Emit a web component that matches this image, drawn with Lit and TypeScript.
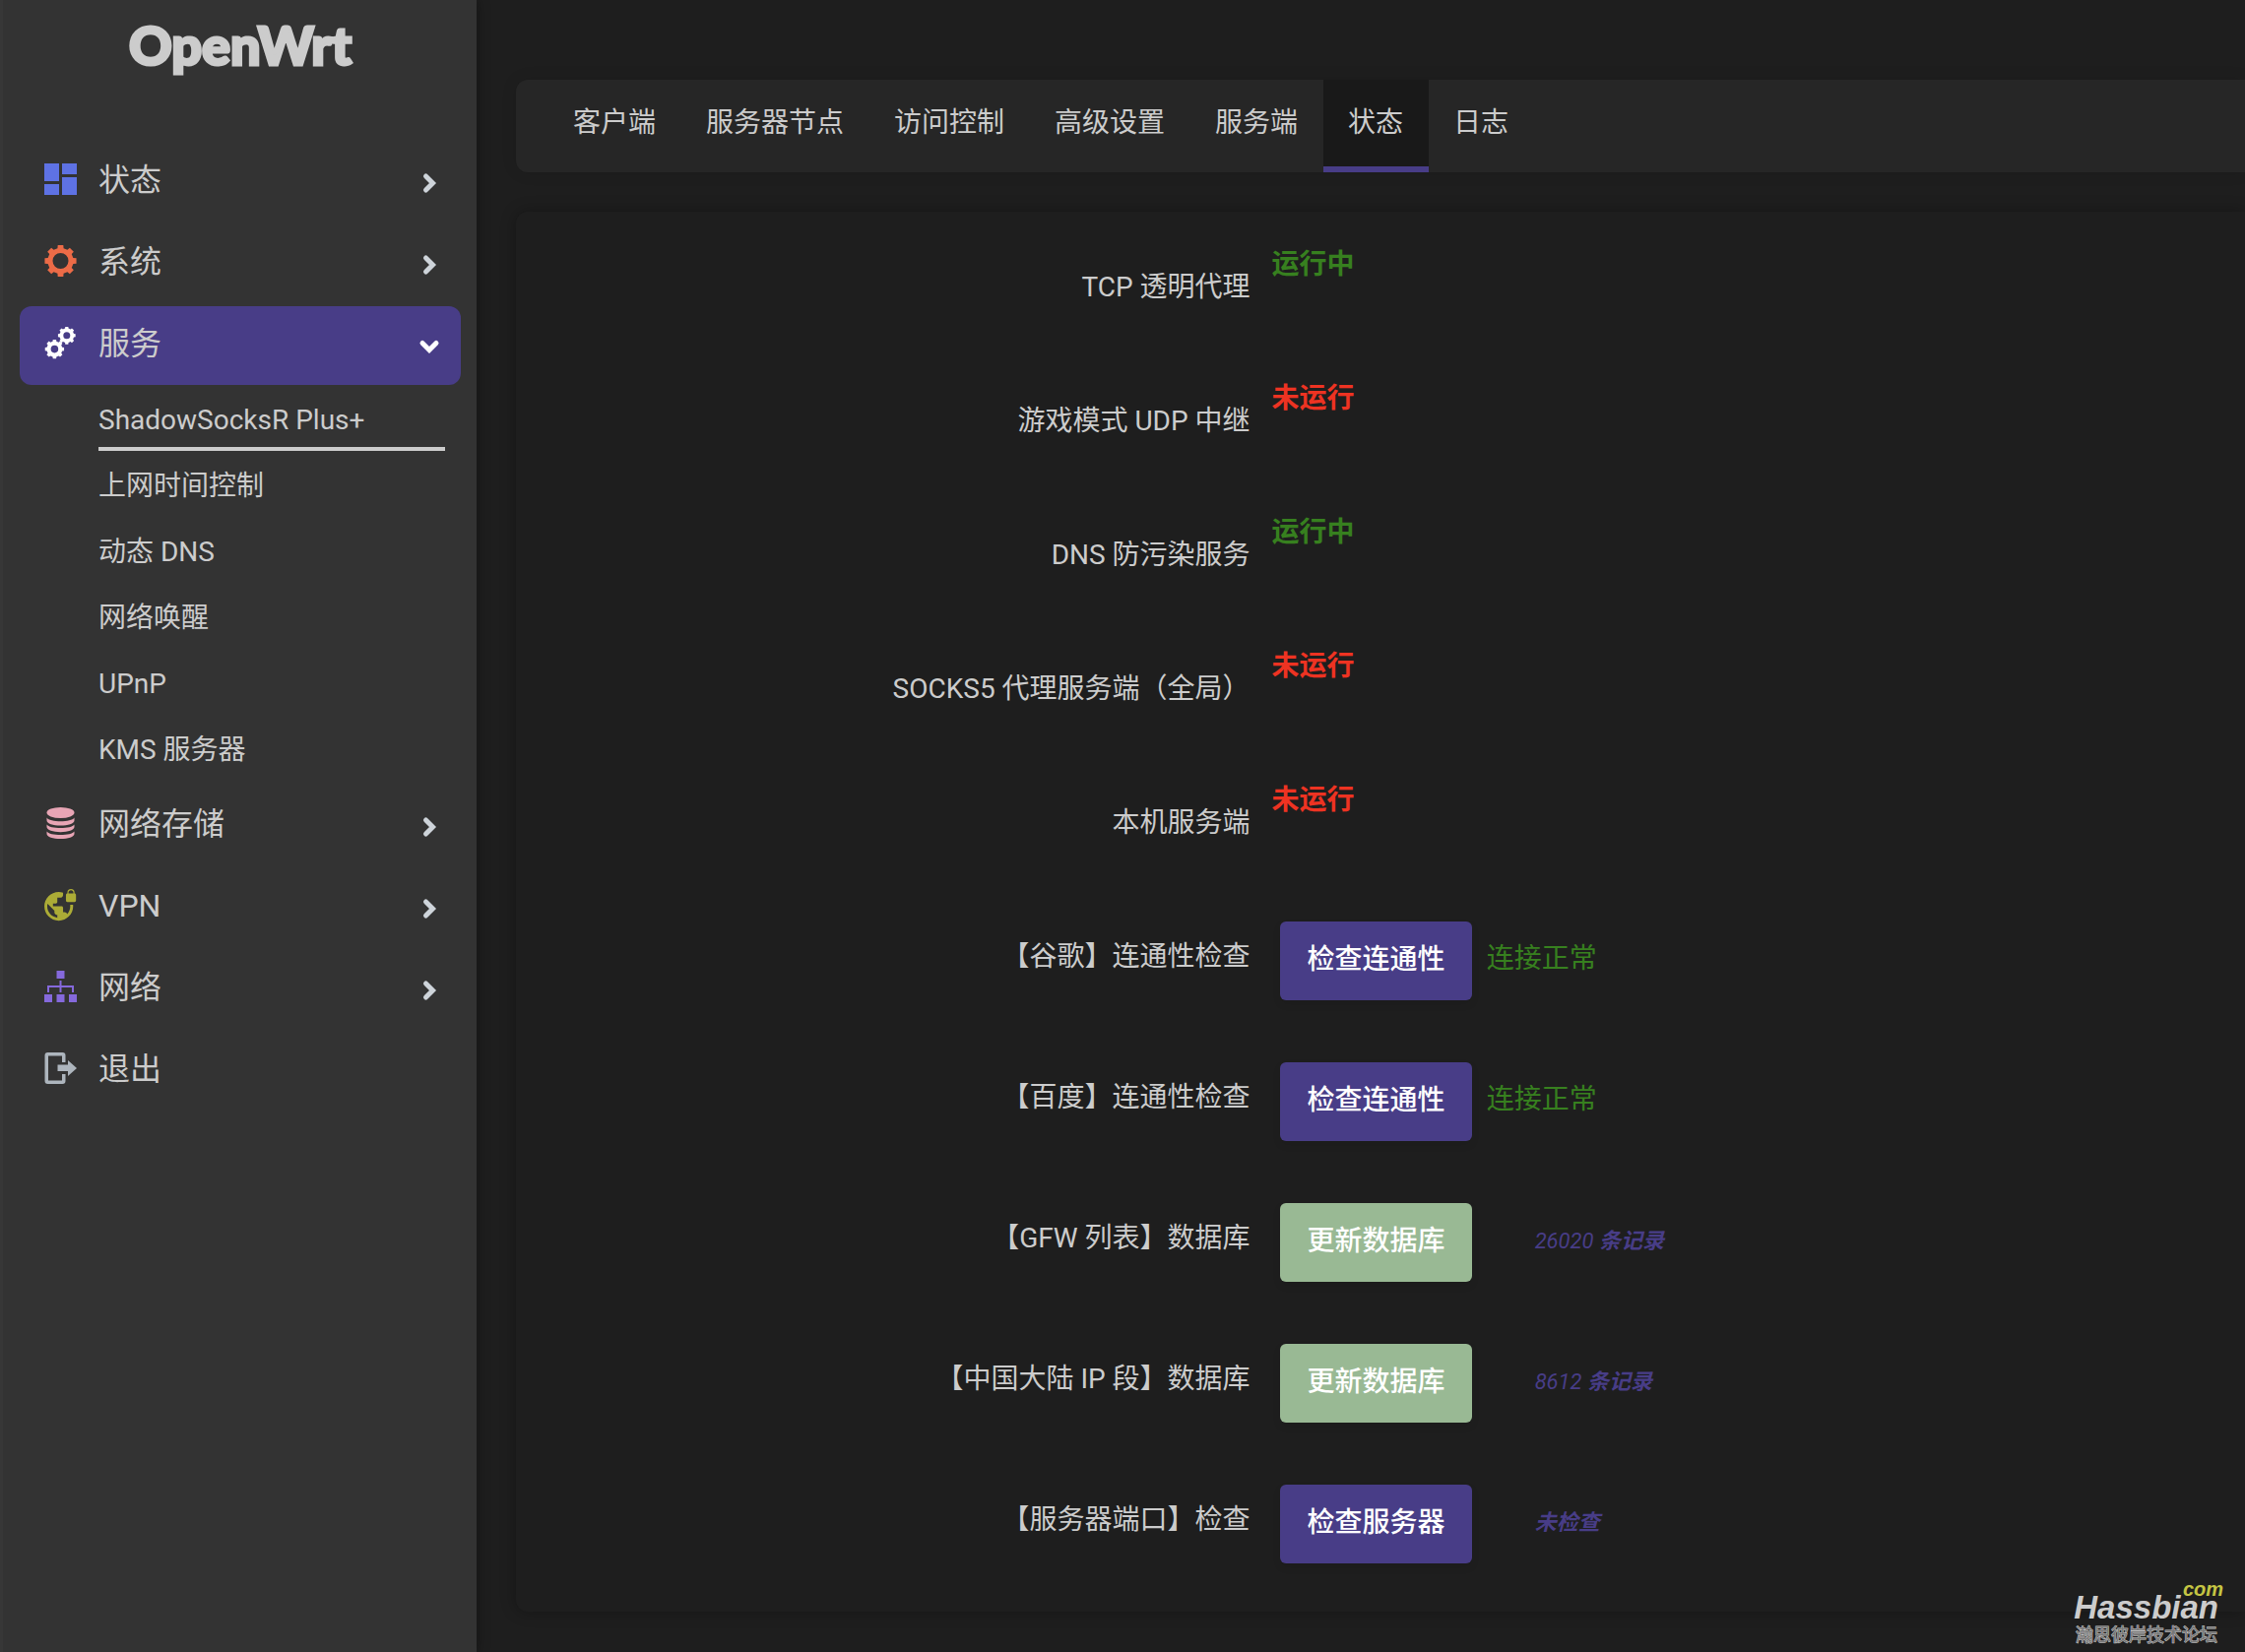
import { LitElement, html, css, svg, nothing } from "lit";
import { customElement, property } from "lit/decorators.js";
import { classMap } from "lit/directives/class-map.js";

// Outline of a toothed wheel, with a round hole, centred on (cx, cy).
function gear(cx: number, cy: number, teeth: number, outer: number, root: number, hole: number) {
  const step = (Math.PI * 2) / teeth;
  const pt = (r: number, a: number) =>
    `${(cx + r * Math.sin(a)).toFixed(2)} ${(cy - r * Math.cos(a)).toFixed(2)}`;
  let d = "";
  for (let i = 0; i < teeth; i++) {
    const a = i * step;
    d += `${i ? "L" : "M"}${pt(root, a - step * 0.3)}L${pt(outer, a - step * 0.22)}L${pt(outer, a + step * 0.22)}L${pt(root, a + step * 0.3)}`;
  }
  d += "Z";
  d += `M${cx + hole} ${cy}A${hole} ${hole} 0 1 0 ${cx - hole} ${cy}A${hole} ${hole} 0 1 0 ${cx + hole} ${cy}Z`;
  return svg`<path fill-rule="evenodd" d=${d} />`;
}

const ICONS: Record<string, unknown> = {
  status: svg`<path d="M0 0h15v18H0zM18 0h15v11H18zM0 21h15v11H0zM18 14h15v18H18z" />`,
  system: gear(16.5, 16, 8, 16.3, 13.2, 8),
  services: svg`${gear(22.8, 8.8, 8, 9, 7.4, 3.5)}${gear(10.4, 22.6, 8, 9.8, 8, 3.8)}`,
  storage: svg`<ellipse cx="16.5" cy="5.5" rx="14" ry="5.5" />
    <path d="M2.5 10.5C4 13 10 14.2 16.5 14.2S29 13 30.5 10.5V13.5C30.5 16.5 24 18.5 16.5 18.5S2.5 16.5 2.5 13.5z" />
    <path d="M2.5 17.5C4 20 10 21 16.5 21S29 20 30.5 17.5V20C30.5 23 24 25.2 16.5 25.2S2.5 23 2.5 20z" />
    <path d="M2.5 24.5C4 27 10 28 16.5 28S29 27 30.5 24.5V27C30.5 30 24 32 16.5 32S2.5 30 2.5 27z" />`,
  vpn: svg`<path transform="translate(-1.4 -1.4) scale(1.46)" d="M22 4v-.5a2.5 2.5 0 0 0-5 0V4c-.55 0-1 .45-1 1v4c0 .55.45 1 1 1h5c.55 0 1-.45 1-1V5c0-.55-.45-1-1-1zm-.8 0h-3.4v-.5c0-.94.76-1.7 1.7-1.7s1.7.76 1.7 1.7V4zm-2.28 8c.04.33.08.66.08 1 0 2.08-.8 3.97-2.1 5.39-.26-.81-1-1.39-1.9-1.39h-1v-3c0-.55-.45-1-1-1H7v-2h2c.55 0 1-.45 1-1V7h2c1.1 0 2-.9 2-2V3.46c-.95-.3-1.95-.46-3-.46C5.48 3 1 7.48 1 13s4.48 10 10 10 10-4.48 10-10c0-.34-.02-.67-.05-1h-2.03zM10 20.93c-3.95-.49-7-3.85-7-7.93 0-.62.08-1.21.21-1.79L8 16v1c0 1.1.9 2 2 2v1.93z" />`,
  network: svg`<path d="M12.5 0h8v8h-8zM0 24h8v8H0zM12.5 24h8v8h-8zM25 24h8v8h-8zM15.5 10h2v5H30v7h-2v-5H17.5v5h-2v-5H5v5H3v-7h12.5z" />`,
  exit: svg`<path d="M4 0h14.5a3 3 0 0 1 3 3v7h-3.5V3.5H4v25h14V22h3.5v7a3 3 0 0 1-3 3H3.5a3 3 0 0 1-3-3V3a3 3 0 0 1 3-3z" />
    <path d="M13.5 12.5H24V8l9 8-9 8v-5H13.5z" />`,
};

interface MenuItem {
  icon: string;
  label: string;
  open?: boolean;
  leaf?: boolean;
  children?: string[];
}

const MENU: MenuItem[] = [
  { icon: "status", label: "状态" },
  { icon: "system", label: "系统" },
  {
    icon: "services",
    label: "服务",
    open: true,
    children: ["ShadowSocksR Plus+", "上网时间控制", "动态 DNS", "网络唤醒", "UPnP", "KMS 服务器"],
  },
  { icon: "storage", label: "网络存储" },
  { icon: "vpn", label: "VPN" },
  { icon: "network", label: "网络" },
  { icon: "exit", label: "退出", leaf: true },
];

const FONT = css`"Roboto", "Noto Sans CJK SC", sans-serif`;
const ACCENT = css`#483d87`;

@customElement("side-menu")
class SideMenu extends LitElement {
  static styles = css`
    :host {
      display: block;
      box-sizing: border-box;
      padding: 0 16px 0 17px;
      background: #333;
      border-left: 3px solid #373737;
      box-shadow: 0 0 12px rgba(0, 0, 0, 0.4);
      font-family: ${FONT};
      color: #ccc;
    }
    a {
      color: inherit;
      text-decoration: none;
    }
    .brand {
      display: block;
      height: 145px;
      font-family: "Lato", sans-serif;
      font-size: 54px;
      font-weight: 900;
      line-height: 92px;
      text-align: center;
      -webkit-text-stroke: 3px #ccc;
    }
    ul {
      margin: 0;
      padding: 0;
      list-style: none;
    }
    .menu {
      display: flex;
      flex-direction: column;
      gap: 3px;
    }
    .item {
      display: flex;
      align-items: center;
      gap: 22px;
      box-sizing: border-box;
      height: 80px;
      padding: 0 24px 6px 25px;
      border-radius: 12px;
      font-size: 32px;
      line-height: 40px;
    }
    .item.open {
      background: ${ACCENT};
    }
    .label {
      flex: 1;
      padding-top: 2px;
    }
    .icon {
      width: 33px;
      height: 32px;
      overflow: visible;
      fill: currentColor;
    }
    .status { color: #5e72e4; }
    .system { color: #ec6b47; }
    .services { color: #fff; }
    .storage { color: #e8a5b5; }
    .vpn { color: #acac36; }
    .network { color: #8569dc; }
    .exit { color: #adb5bd; }
    .chevron {
      width: 16px;
      height: 22px;
      padding-top: 8px;
      fill: none;
      stroke: #ced4da;
      stroke-width: 5;
      stroke-linecap: round;
    }
    .open .chevron {
      width: 22px;
      height: 16px;
      stroke: #fff;
      margin-right: -3px;
    }
    .sub {
      padding: 0 16px 3px 80px;
    }
    .sub a {
      display: block;
      box-sizing: border-box;
      height: 67px;
      font-size: 28px;
      line-height: 71px;
    }
    .sub .current {
      border-bottom: 4px solid #ccc;
    }
  `;

  render() {
    return html`
      <a class="brand" href="#">OpenWrt</a>
      <nav>
        <ul class="menu">
          ${MENU.map(
            (m) => html`<li>
              <a class=${classMap({ item: true, open: !!m.open })} href="#">
                <svg class="icon ${m.icon}" viewBox="0 0 33 32" aria-hidden="true">${ICONS[m.icon]}</svg>
                <span class="label">${m.label}</span>
                ${m.leaf
                  ? nothing
                  : m.open
                    ? html`<svg class="chevron" viewBox="0 0 22 16" aria-hidden="true"><path d="M4 4.5L11 11.5L18 4.5" /></svg>`
                    : html`<svg class="chevron" viewBox="0 0 16 22" aria-hidden="true"><path d="M4.5 4L11.5 11L4.5 18" /></svg>`}
              </a>
              ${m.children
                ? html`<ul class="sub">
                    ${m.children.map((c, i) => html`<li><a class=${classMap({ current: i === 0 })} href="#">${c}</a></li>`)}
                  </ul>`
                : nothing}
            </li>`
          )}
        </ul>
      </nav>
    `;
  }
}

@customElement("tab-bar")
class TabBar extends LitElement {
  @property({ attribute: false }) tabs: string[] = [];
  @property() current = "";

  static styles = css`
    :host {
      display: block;
      background: #262626;
      border-radius: 12px 0 0 12px;
      box-shadow: 0 0 16px rgba(0, 0, 0, 0.1);
    }
    nav {
      display: flex;
      padding: 0 33px;
    }
    a {
      box-sizing: border-box;
      height: 94px;
      padding: 0 26px 0 25px;
      border-bottom: 6px solid transparent;
      font-size: 28px;
      line-height: 87px;
      color: #ccc;
      text-decoration: none;
      white-space: nowrap;
    }
    .active {
      background: #191919;
      border-bottom-color: ${ACCENT};
    }
  `;

  render() {
    return html`<nav>
      ${this.tabs.map((t) => html`<a class=${classMap({ active: t === this.current })} href="#">${t}</a>`)}
    </nav>`;
  }
}

interface Check {
  label: string;
  action: string;
  kind: "apply" | "reload";
  result?: string;
  note?: string;
  noteNumber?: string;
}

const SERVICES: [string, boolean][] = [
  ["TCP 透明代理", true],
  ["游戏模式 UDP 中继", false],
  ["DNS 防污染服务", true],
  ["SOCKS5 代理服务端（全局）", false],
  ["本机服务端", false],
];

const CHECKS: Check[] = [
  { label: "【谷歌】连通性检查", action: "检查连通性", kind: "apply", result: "连接正常" },
  { label: "【百度】连通性检查", action: "检查连通性", kind: "apply", result: "连接正常" },
  { label: "【GFW 列表】数据库", action: "更新数据库", kind: "reload", noteNumber: "26020", note: "条记录" },
  { label: "【中国大陆 IP 段】数据库", action: "更新数据库", kind: "reload", noteNumber: "8612", note: "条记录" },
  { label: "【服务器端口】检查", action: "检查服务器", kind: "apply", note: "未检查" },
];

@customElement("status-panel")
class StatusPanel extends LitElement {
  static styles = css`
    :host {
      display: block;
      padding: 8px 0 19px;
      background: #1e1e1e;
      border-radius: 12px 0 0 12px;
      box-shadow: 0 0 16px rgba(0, 0, 0, 0.3);
      font-size: 28px;
      line-height: 40px;
      color: #ccc;
    }
    .row {
      display: grid;
      grid-template-columns: 43fr 57fr;
      column-gap: 22px;
      height: 136px;
    }
    .row.check {
      height: 143px;
    }
    .label {
      padding-top: 49px;
      text-align: right;
    }
    .state {
      padding-top: 26px;
      font-weight: 700;
    }
    .on { color: #37801f; }
    .off { color: #ee3322; }
    .value {
      display: flex;
      align-items: flex-start;
      padding: 33px 0 0 8px;
    }
    button {
      box-sizing: border-box;
      height: 80px;
      padding: 0 27px 2px 28px;
      border: 0;
      border-radius: 6px;
      box-shadow: 0 4px 8px rgba(0, 0, 0, 0.08);
      font: inherit;
      line-height: 78px;
      font-weight: 500;
      color: #fff;
    }
    .apply { background: ${ACCENT}; }
    .reload { background: #99b994; }
    .result {
      padding-left: 15px;
      line-height: 75px;
    }
    .note {
      padding-left: 64px;
      font-size: 22px;
      font-weight: 700;
      font-style: italic;
      line-height: 78px;
      color: ${ACCENT};
    }
    .number {
      font-weight: 400;
    }
  `;

  render() {
    return html`
      ${SERVICES.map(
        ([label, running]) => html`<div class="row">
          <div class="label">${label}</div>
          <div class="state ${running ? "on" : "off"}">${running ? "运行中" : "未运行"}</div>
        </div>`
      )}
      ${CHECKS.map(
        (c, i) => html`<div class="row check">
          <div class="label" id="check-${i}">${c.label}</div>
          <div class="value">
            <button class=${c.kind} type="button" aria-describedby="check-${i}">${c.action}</button>
            ${c.result ? html`<span class="result on">${c.result}</span>` : nothing}
            ${c.note
              ? html`<span class="note">${c.noteNumber ? html`<span class="number">${c.noteNumber} </span>` : nothing}${c.note}</span>`
              : nothing}
          </div>
        </div>`
      )}
    `;
  }
}

@customElement("app-root")
class AppRoot extends LitElement {
  static styles = css`
    :host {
      display: grid;
      grid-template-columns: 484px 1fr;
      min-height: 100vh;
      position: relative;
      overflow: hidden;
      background: #1e1e1e;
      font-family: ${FONT};
      color: #ccc;
    }
    main {
      display: flex;
      flex-direction: column;
      gap: 40px;
      min-width: 0;
      padding: 81px 0 40px 40px;
    }
    .watermark {
      position: absolute;
      right: 22px;
      bottom: 4px;
      display: flex;
      flex-direction: column;
      align-items: flex-end;
      font-family: "Liberation Sans", "Noto Sans CJK SC", sans-serif;
    }
    .tld {
      font-size: 20px;
      font-weight: 700;
      font-style: italic;
      line-height: 8px;
      color: #c5c543;
    }
    .site {
      padding-right: 5px;
      font-size: 33px;
      font-weight: 700;
      font-style: italic;
      line-height: 30px;
      color: #ccc;
    }
    .forum {
      padding-right: 6px;
      font-size: 18px;
      line-height: 26px;
      font-weight: 400;
      color: #777;
      -webkit-text-stroke: 1px #c4c4c4;
      paint-order: stroke fill;
    }
  `;

  render() {
    return html`
      <side-menu></side-menu>
      <main>
        <tab-bar
          .tabs=${["客户端", "服务器节点", "访问控制", "高级设置", "服务端", "状态", "日志"]}
          current="状态"
        ></tab-bar>
        <status-panel></status-panel>
      </main>
      <div class="watermark">
        <span class="tld">com</span>
        <span class="site">Hassbian</span>
        <span class="forum">瀚思彼岸技术论坛</span>
      </div>
    `;
  }
}
